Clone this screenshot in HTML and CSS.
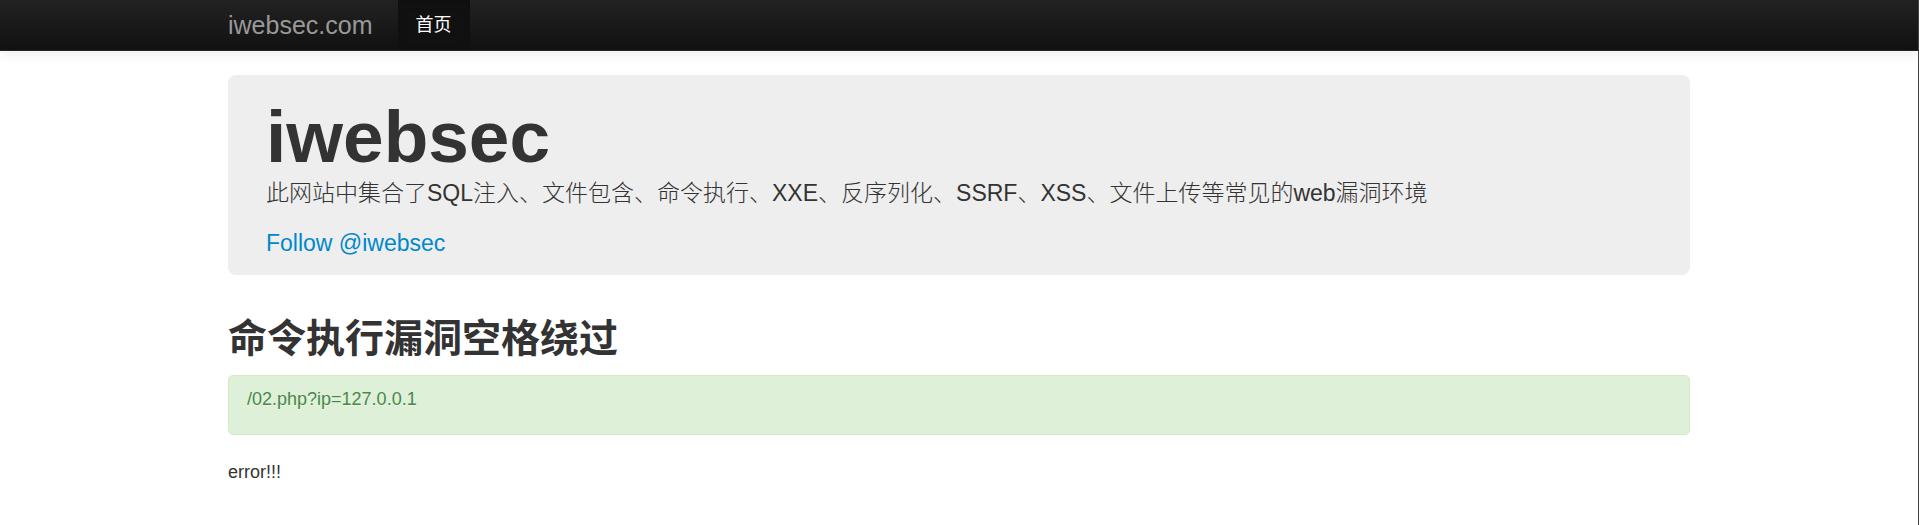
FILE: index.html
```html
<!DOCTYPE html>
<html lang="zh-CN">
<head>
<meta charset="utf-8">
<title>iwebsec.com</title>
<link rel="stylesheet" href="styles.css">
</head>
<body>
<header class="navbar">
  <nav class="container nav-inner">
    <a class="brand" href="#">iwebsec.com</a>
    <a class="nav-link" href="#">首页</a>
  </nav>
</header>
<main class="container">
  <section class="hero">
    <h1>iwebsec</h1>
    <p>此网站中集合了SQL注入、文件包含、命令执行、XXE、反序列化、SSRF、XSS、文件上传等常见的web漏洞环境</p>
    <p class="follow"><a href="#">Follow @iwebsec</a></p>
  </section>
  <h2>命令执行漏洞空格绕过</h2>
  <div class="alert">/02.php?ip=127.0.0.1</div>
  <p class="result">error!!!</p>
</main>
</body>
</html>
```
FILE: styles.css
```css
* { box-sizing: border-box; }
body {
  margin: 0;
  min-height: 100vh;
  border-right: 1px solid #444;
  background: #fff;
  color: #333;
  font-family: "Liberation Sans", "Noto Sans CJK SC", sans-serif;
  font-size: 18px;
  line-height: 25px;
}
a { color: #08c; text-decoration: none; }
h1, h2, p { margin: 0; }
.container {
  width: 100%;
  max-width: 1462px;
  margin: 0 auto;
}
.navbar {
  height: 51px;
  background: linear-gradient(#222, #111);
  border-bottom: 1px solid #252525;
  box-shadow: 0 1px 13px rgba(0, 0, 0, 0.1);
}
.nav-inner { display: flex; height: 50px; }
.brand {
  padding: 0 25px 0 0;
  color: #999;
  font-size: 25px;
  line-height: 50px;
}
.nav-link {
  padding: 0 18px;
  background: #111;
  color: #fff;
  line-height: 50px;
  box-shadow: inset 0 3px 8px rgba(0, 0, 0, 0.125);
}
.hero {
  margin-top: 24px;
  padding: 24px 38px 13px;
  border-radius: 8px;
  background: #eee;
  font-size: 23px;
  font-weight: 300;
  line-height: 38px;
}
.hero h1 {
  font-size: 73px;
  font-weight: 700;
  line-height: 75px;
}
.follow { margin-top: 12px; }
h2 {
  margin: 39px 0 11px;
  font-size: 39px;
  line-height: 50px;
}
.alert {
  min-height: 60px;
  padding: 11px 18px;
  border: 1px solid #d6e9c6;
  border-radius: 5px;
  background: #dff0d8;
  color: #468847;
  text-shadow: 0 1px 0 rgba(255, 255, 255, 0.5);
}
.result { margin-top: 25px; }
```
